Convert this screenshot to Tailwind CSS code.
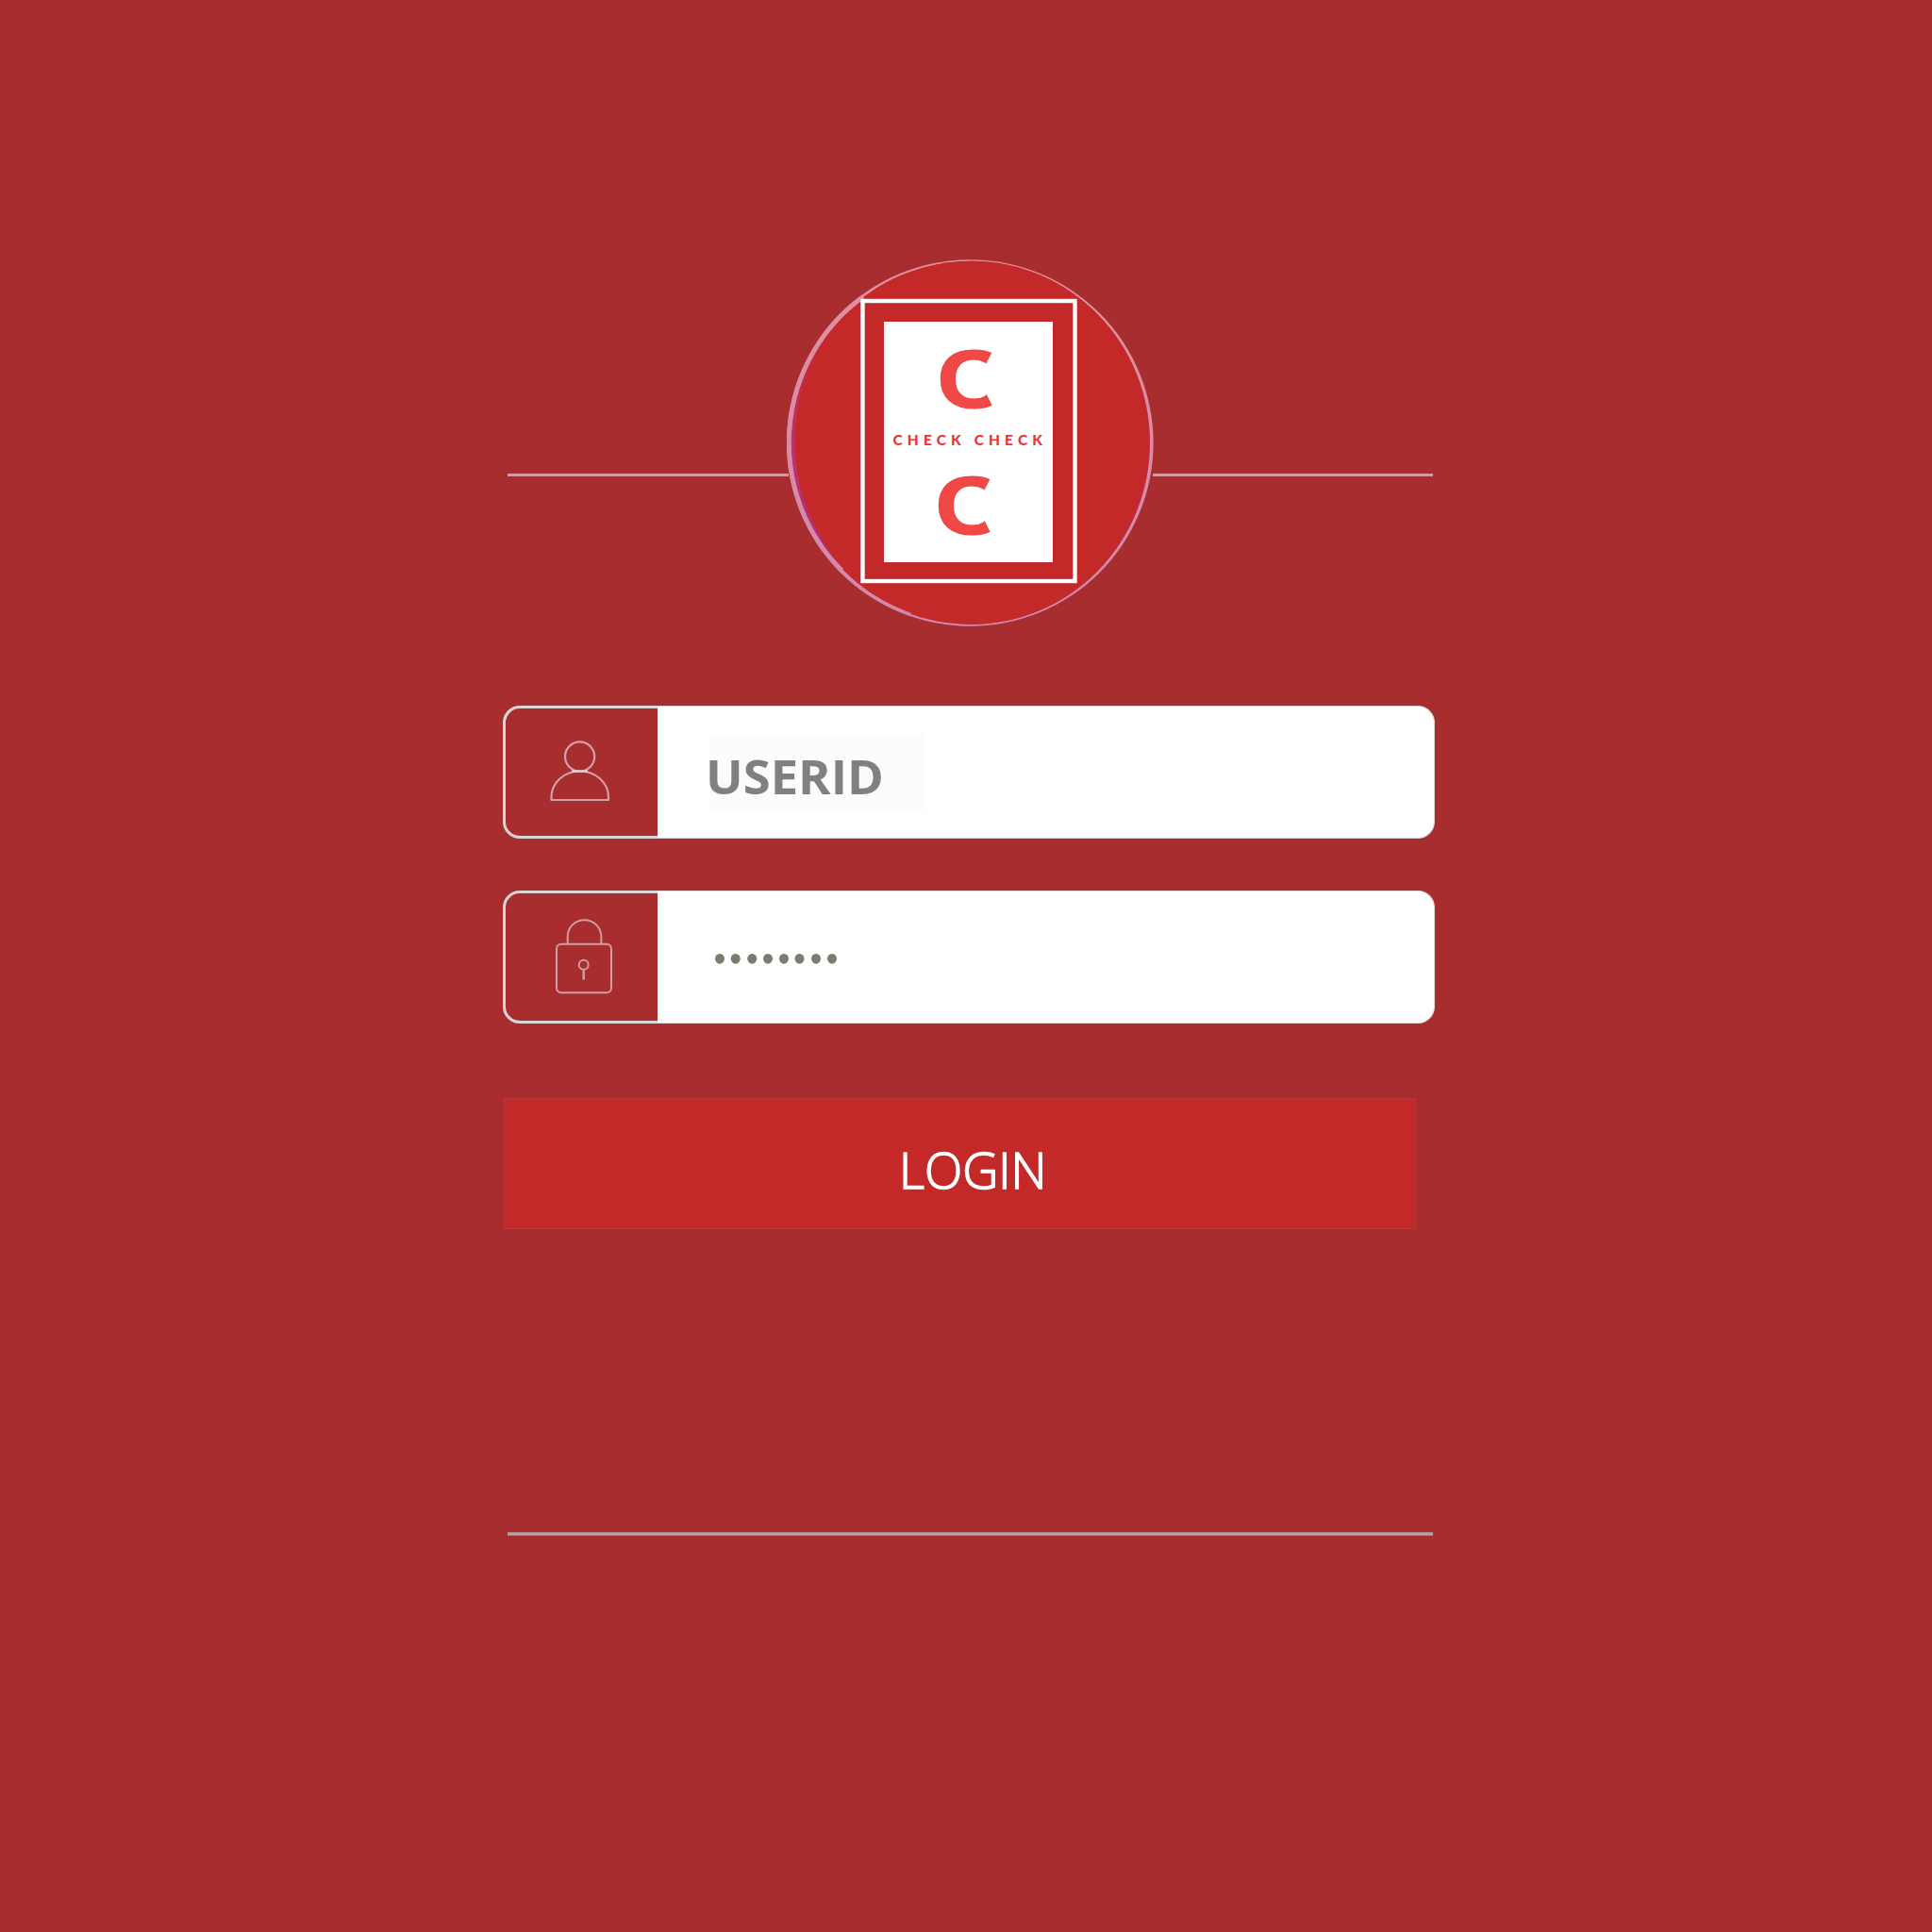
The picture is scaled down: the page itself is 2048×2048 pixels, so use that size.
<!DOCTYPE html>
<html lang="en">
<head>
<meta charset="utf-8">
<title>Check Check</title>
<script src="https://cdn.jsdelivr.net/npm/@tailwindcss/browser@4"></script>
</head>
<body class="bg-[#a82d2f]">
<main class="flex h-[2048px] w-[2048px] flex-col pl-[533px] pt-[274px]">
  <header class="flex h-[391px] w-[986px] pl-[5px]">
    <div class="mt-[228px] h-[3px] w-[298px] bg-[#d8969f]"></div>
    <svg class="-mx-0.5 h-[391px] w-[390px] shrink-0" viewBox="834 274 390 391">
      <defs>
        <linearGradient id="rim" gradientUnits="userSpaceOnUse" x1="0" y1="275" x2="0" y2="664"><stop offset="0" stop-color="#e0909c"/><stop offset="1" stop-color="#d088ac"/></linearGradient>
        <linearGradient id="glow" x1="0" y1="0" x2="0" y2="1"><stop offset=".2" stop-color="#c22929"/><stop offset=".5" stop-color="#c03068"/><stop offset=".75" stop-color="#b03080"/><stop offset=".88" stop-color="#c42929"/></linearGradient>
        <clipPath id="cut"><path d="M980 355H1061L1037.200 401.300L1061 448H980z"/></clipPath>
      </defs>
      <circle cx="1028.3" cy="469.5" r="194.3" fill="url(#rim)"/>
      <ellipse cx="1028.9" cy="469.3" rx="190.2" ry="192.600" fill="url(#glow)"/>
      <ellipse cx="1030.500" cy="469.2" rx="188" ry="192.4" fill="#c42929"/>
      <path d="M915 314.500A191.600 191.600 0 0 0 892.500 605" fill="none" stroke="url(#rim)" stroke-width="4.800"/>
      <path d="M892 605A192.500 192.500 0 0 0 965 651.300" fill="none" stroke="url(#rim)" stroke-width="3.400"/>
      <rect x="914.5" y="319" width="225" height="297" fill="#c42929" stroke="#fff" stroke-width="4.4"/>
      <rect x="937" y="341" width="179" height="255" fill="#fff"/>
      <g fill="#f04747">
        <g font-family="Liberation Sans, Arial, sans-serif" font-weight="700" font-size="87" stroke="#f04747" stroke-width="1.200">
          <g clip-path="url(#cut)"><text x="993.300" y="431.500" textLength="74" lengthAdjust="spacingAndGlyphs">C</text></g>
          <g transform="translate(-2 134.300)"><g clip-path="url(#cut)"><text x="993.300" y="431.500" textLength="74" lengthAdjust="spacingAndGlyphs">C</text></g></g>
        </g>
        <text x="946.500" y="471.500" font-family="Lato, sans-serif" font-weight="900" font-size="15.5" fill="#ee3338" textLength="158.500" lengthAdjust="spacing">CHECK CHECK</text>
      </g>
    </svg>
    <div class="mt-[228px] h-[3px] w-[297px] bg-[#d8969f]"></div>
  </header>

  <form class="flex flex-col">
    <label class="mt-[83px] flex h-[141px] w-[988px]">
      <span class="h-full w-[164px] shrink-0 rounded-l-[18px] border-y-[3px] border-l-[3px] border-[#d6d6d6]">
        <svg class="h-full w-full" viewBox="536 751 161 135" fill="none" stroke="#d3a0ad" stroke-width="2.2">
          <circle cx="614.6" cy="802" r="15.6"/>
          <path d="M584.5 848V845a30.250 27.500 0 0 1 60.5 0v3z" stroke-linejoin="round"/>
          <path d="M606 817.500h17" stroke="#ead0d6"/>
        </svg>
      </span>
      <span class="flex h-full grow rounded-r-[18px] border-y border-r border-[#cfcfcf] bg-white pl-[54px] pt-[30px]">
        <span class="h-[81px] w-[229px] bg-[#fefcfb]">
          <svg class="h-full w-full overflow-visible" viewBox="751 779 229 81"><text x="748" y="842" font-family="Open Sans, sans-serif" font-weight="700" font-size="51" fill="#808080" textLength="189" lengthAdjust="spacingAndGlyphs">USERID</text></svg>
        </span>
      </span>
    </label>
    <label class="mt-[55px] flex h-[141px] w-[988px]">
      <span class="h-full w-[164px] shrink-0 rounded-l-[18px] border-y-[3px] border-l-[3px] border-[#d6d6d6]">
        <svg class="h-full w-full" viewBox="536 947 161 135" fill="none" stroke="#cf9da2" stroke-width="2">
          <rect x="590" y="1000.800" width="58" height="51.500" rx="5"/>
          <path d="M601.700 1000V993a17.800 17.800 0 0 1 35.600 0v7"/>
          <circle cx="618.700" cy="1022.800" r="5"/>
          <path d="M618.700 1028v10.500" stroke-width="2.500"/>
        </svg>
      </span>
      <span class="h-full grow rounded-r-[18px] border-y border-r border-[#e2d6d6] bg-white">
        <svg class="h-full w-[300px]" viewBox="697 945 300 139" fill="#7b7b72">
          <ellipse cx="763" cy="1016.300" rx="5" ry="5.400"/><ellipse cx="779.700" cy="1016.300" rx="5" ry="5.400"/><ellipse cx="797.300" cy="1016.300" rx="5" ry="5.400"/><ellipse cx="814" cy="1016.300" rx="5" ry="5.400"/><ellipse cx="831" cy="1016.300" rx="5" ry="5.400"/><ellipse cx="847.500" cy="1016.300" rx="5" ry="5.400"/><ellipse cx="865" cy="1016.300" rx="5" ry="5.400"/><ellipse cx="882" cy="1016.300" rx="5" ry="5.400"/>
        </svg>
      </span>
    </label>
    <button type="button" class="ml-px mt-[79px] h-[139px] w-[967px] border border-[#b8383a] bg-[#c42929]">
      <svg class="block h-full w-full" viewBox="535 1165 965 137"><text x="953" y="1260" font-family="Open Sans, sans-serif" font-weight="300" font-size="53.500" fill="#fff" stroke="#fff" stroke-width="1.500" textLength="156.500" lengthAdjust="spacingAndGlyphs">LOGIN</text></svg>
    </button>
  </form>
  <div class="ml-[5px] mt-[321px] h-1 w-[981px] border-y border-[#b08084] bg-[#b5a5aa]"></div>
</main>
</body>
</html>
